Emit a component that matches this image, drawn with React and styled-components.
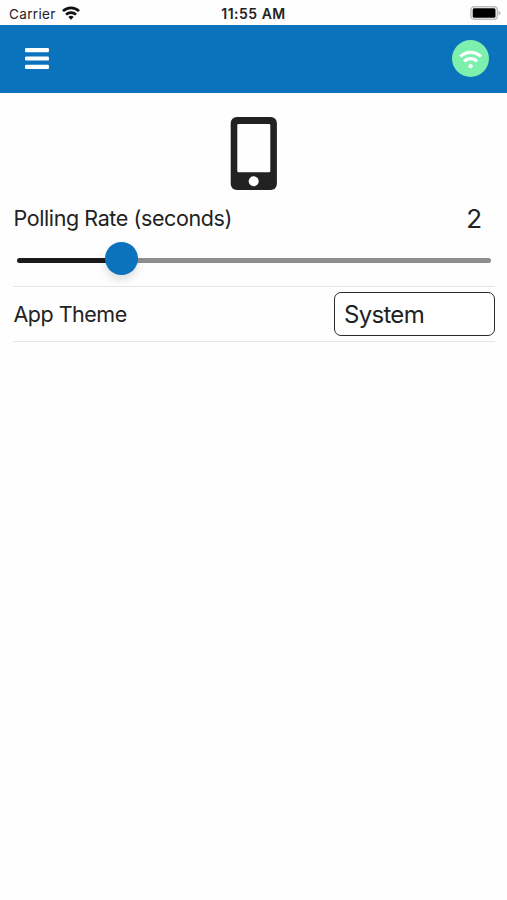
import React, { useState } from 'react';
import styled, { createGlobalStyle } from 'styled-components';

const GlobalStyle = createGlobalStyle`
  * {
    box-sizing: border-box;
  }

  body {
    margin: 0;
    background: #fefefe;
    color: #222;
    font-family: Inter, 'Liberation Sans', sans-serif;
  }
`;

const Screen = styled.div`
  min-height: 100vh;
  display: flex;
  flex-direction: column;
`;

const StatusBar = styled.div`
  height: 25px;
  padding: 3px 6px 0 6px;
  display: grid;
  grid-template-columns: 1fr auto 1fr;
  align-items: center;
  line-height: 20px;
`;

const Carrier = styled.div`
  display: flex;
  align-items: center;
  gap: 6.5px;
  padding-left: 3px;
  font-size: 13.5px;
  letter-spacing: 0.35px;

  svg {
    margin-bottom: 2px;
  }
`;

const Clock = styled.div`
  font-size: 14px;
  font-weight: 600;
  letter-spacing: 0.5px;
`;

const BatterySlot = styled.div`
  display: flex;
  justify-content: flex-end;
  padding-bottom: 2px;
`;

const Header = styled.header`
  height: 67.5px;
  padding: 0 18px 0 25px;
  display: flex;
  align-items: center;
  justify-content: space-between;
  background: #0b72bc;
`;

const MenuButton = styled.button`
  display: flex;
  padding: 0;
  border: 0;
  background: none;
  color: #fff;
`;

const ConnectionBadge = styled.div`
  width: 37px;
  height: 37px;
  display: flex;
  align-items: center;
  justify-content: center;
  border-radius: 50%;
  background: #7df0ad;
  color: #fff;
`;

const Content = styled.main`
  padding: 24.5px 12px 0 13px;
`;

const DeviceIcon = styled.svg`
  display: block;
  width: 48px;
  height: 73px;
  margin: 0 auto;
`;

const Setting = styled.section`
  border-bottom: 1.5px solid #e6e6e6;
`;

const Row = styled.div`
  height: ${({ $height }) => $height}px;
  padding-top: ${({ $offset }) => $offset || 0}px;
  display: flex;
  align-items: center;
  justify-content: space-between;
`;

const Label = styled.span`
  padding-left: 0.5px;
  font-size: 21.5px;
  letter-spacing: ${({ $spacing }) => $spacing}px;
`;

const Value = styled.span`
  padding: 2px 13px 0 0;
  font-size: 26px;
`;

const SliderBox = styled.div`
  height: 44px;
  padding: 0 4px;
`;

const Slider = styled.input`
  appearance: none;
  display: block;
  width: 100%;
  height: 33px;
  margin: 0;
  background: none;

  &::-webkit-slider-runnable-track {
    height: 5px;
    margin-top: 4px;
    border-radius: 3px;
    background: linear-gradient(#1b1b1d, #1b1b1d) left / 22% 100% no-repeat #8e8e8e;
  }

  &::-webkit-slider-thumb {
    appearance: none;
    width: 33px;
    height: 33px;
    margin-top: -16px;
    border-radius: 50%;
    background: #0b72bc;
    box-shadow: 0 5px 9px rgba(0, 0, 0, 0.13);
  }
`;

const Select = styled.button`
  width: 161px;
  height: 44px;
  padding: 0 9px;
  border: 1.5px solid #2b2b2b;
  border-radius: 7px;
  background: #fff;
  color: inherit;
  font: inherit;
  font-size: 24px;
  letter-spacing: -0.7px;
  text-align: left;
`;

function WifiSignal() {
  return (
    <svg width="18" height="14" viewBox="0 0 18 14" fill="none" stroke="#111" strokeWidth="2.7">
      <path d="M1 5.1a11.4 11.4 0 0 1 16 0" />
      <path d="M4 8.6a7.2 7.2 0 0 1 10 0" />
      <path d="M6.3 11a3.9 3.9 0 0 1 5.4 0L9 13.8z" fill="#111" stroke="none" />
    </svg>
  );
}

function Battery() {
  return (
    <svg width="31" height="14" viewBox="0 0 31 14">
      <rect x="0.9" y="0.7" width="26.4" height="12.6" rx="3.2" fill="#fff" stroke="#bdbdbd" strokeWidth="1.4" />
      <rect x="2.7" y="2.3" width="22.8" height="9.4" rx="1.5" fill="#000" />
      <path d="M28.5 4.6c1.4.4 2 1.3 2 2.4s-.6 2-2 2.4z" fill="#bdbdbd" />
    </svg>
  );
}

function MenuIcon() {
  return (
    <svg width="24" height="21" viewBox="0 0 24 21" fill="currentColor">
      <rect width="24" height="4.2" rx="1.3" />
      <rect y="8.4" width="24" height="4.2" rx="1.3" />
      <rect y="16.8" width="24" height="4.2" rx="1.3" />
    </svg>
  );
}

function ConnectionIcon() {
  return (
    <svg width="24" height="20" viewBox="0 0 24 20" fill="none" stroke="currentColor" strokeWidth="3.2">
      <path d="M1.2 7.7a14.8 14.8 0 0 1 20.8 0" />
      <path d="M5.2 12.3a9 9 0 0 1 12.8 0" />
      <circle cx="11.6" cy="17.2" r="2.1" fill="currentColor" stroke="none" />
    </svg>
  );
}

function App() {
  const [rate, setRate] = useState(2);

  return (
    <Screen>
      <GlobalStyle />
      <StatusBar>
        <Carrier>
          Carrier
          <WifiSignal />
        </Carrier>
        <Clock>11:55 AM</Clock>
        <BatterySlot>
          <Battery />
        </BatterySlot>
      </StatusBar>
      <Header>
        <MenuButton aria-label="Menu">
          <MenuIcon />
        </MenuButton>
        <ConnectionBadge>
          <ConnectionIcon />
        </ConnectionBadge>
      </Header>
      <Content>
        <DeviceIcon viewBox="0 0 48 73">
          <rect x="0.7" width="46.2" height="73" rx="6" fill="#222" />
          <rect x="7.3" y="7" width="33" height="48.3" rx="1.3" fill="#fefefe" />
          <circle cx="23.7" cy="64.3" r="5" fill="#fefefe" />
        </DeviceIcon>
        <Setting>
          <Row $height={52} $offset={3}>
            <Label $spacing={-0.4}>Polling Rate (seconds)</Label>
            <Value>{rate}</Value>
          </Row>
          <SliderBox>
            <Slider
              type="range"
              min="1"
              max="6"
              step="any"
              value={rate}
              aria-label="Polling rate"
              onChange={(e) => setRate(Math.round(e.target.value))}
            />
          </SliderBox>
        </Setting>
        <Setting>
          <Row $height={54}>
            <Label $spacing={-0.5}>App Theme</Label>
            <Select>System</Select>
          </Row>
        </Setting>
      </Content>
    </Screen>
  );
}

export default App;
